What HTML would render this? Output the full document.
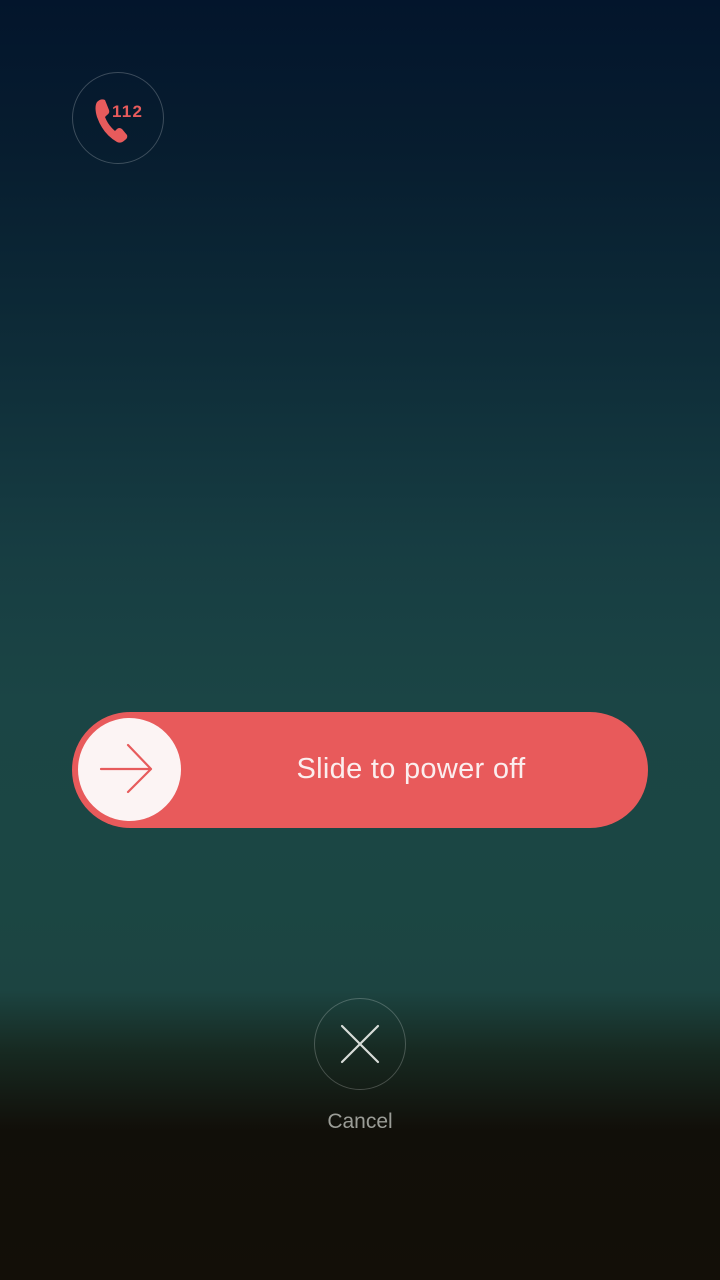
<!DOCTYPE html>
<html><head><meta charset="utf-8"><style>
html,body{margin:0;padding:0}
body{width:720px;height:1280px;position:relative;overflow:hidden;font-family:"Liberation Sans",sans-serif;
background:linear-gradient(to bottom,#03152c 0px,#071d2f 150px,#0e2c38 350px,#173d42 550px,#1b4545 700px,#1b4643 900px,#1c4441 990px,#172a22 1050px,#110f09 1130px,#130f08 1280px);}
.c{position:absolute;border:1px solid rgba(255,255,255,0.22);border-radius:50%;box-sizing:border-box}
</style></head><body>
<div class="c" style="left:72px;top:72px;width:92px;height:92px"></div>
<svg style="position:absolute;left:72px;top:72px" width="92" height="92" viewBox="0 0 92 92">
<path d="M25 30 q4 -4 8 -2 l4 10 q1 3 -2 5 l-2 2 q3 8 10 14 l2 -2 q2 -2 5 0 l5 6 q1 3 -2 5 q-4 4 -8 2 q-14 -8 -20 -25 q-3 -10 0 -15z" fill="#e75b5c"/>
<text x="40" y="45" font-size="17" font-weight="bold" fill="#e75b5c" font-family="Liberation Sans,sans-serif" textLength="30">112</text>
</svg>
<div style="position:absolute;left:72px;top:712px;width:576px;height:116px;border-radius:58px;background:#e85a5b"></div>
<div style="position:absolute;left:78px;top:718px;width:103px;height:103px;border-radius:50%;background:#fcf4f4"></div>
<svg style="position:absolute;left:78px;top:718px" width="103" height="103" viewBox="0 0 103 103">
<path d="M23 51 H73 M50 27 L73 51 L50 74" stroke="#e75b5c" stroke-width="2.2" fill="none" stroke-linecap="round" stroke-linejoin="round"/>
</svg>
<div style="position:absolute;left:181px;top:751px;width:460px;text-align:center;color:#fbeeee;font-size:29px;line-height:36px;letter-spacing:0.3px">Slide to power off</div>
<div class="c" style="left:314px;top:998px;width:92px;height:92px"></div>
<svg style="position:absolute;left:314px;top:998px" width="92" height="92" viewBox="0 0 92 92">
<path d="M28 28 L64 64 M64 28 L28 64" stroke="#d8dcd8" stroke-width="2.2" stroke-linecap="round"/>
</svg>
<div style="position:absolute;left:260px;top:1110px;width:200px;text-align:center;color:#9b9d97;font-size:21px">Cancel</div>
</body></html>
